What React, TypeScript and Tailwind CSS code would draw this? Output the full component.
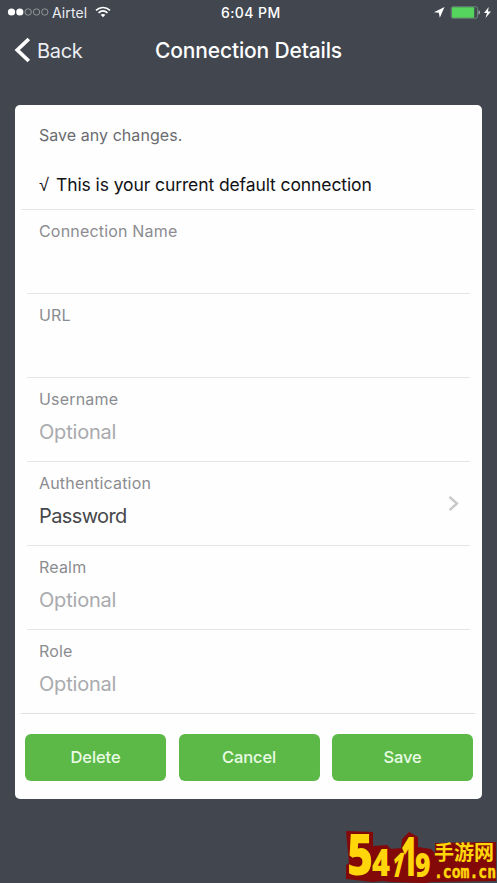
import React from "react";

type FieldProps = {
  label: string;
  value?: string;
  placeholder?: string;
  chevron?: boolean;
  last?: boolean;
};

const Field = ({ label, value, placeholder, chevron, last }: FieldProps) => {
  return (
    <div className="relative h-[84px]">
      <div className="px-[24px] pt-[9px]">
        <p className="text-[16px] leading-[24px] tracking-[0.18px] text-[#8b8c90]">
          {label}
        </p>
        {placeholder && (
          <p className="mt-[9px] text-[20px] leading-[24px] tracking-[-0.2px] text-[#a9aaad]">
            {placeholder}
          </p>
        )}
        {value && (
          <p className="mt-[9px] text-[20px] leading-[24px] tracking-[-0.6px] text-[#47484c]">
            {value}
          </p>
        )}
      </div>
      {chevron && (
        <svg
          className="absolute left-[433px] top-[33px]"
          width="12"
          height="18"
          viewBox="0 0 12 18"
          fill="none"
          stroke="#c8c8cb"
          strokeWidth="2.4"
        >
          <path d="M1.5 1.8 9 8.5 1.5 15.2" />
        </svg>
      )}
      <div
        className={
          last
            ? "absolute bottom-0 left-[6px] right-[7px] h-px bg-[#dfe1e4]"
            : "absolute bottom-0 left-[12px] right-[12px] h-px bg-[#e5e6ea]"
        }
      />
    </div>
  );
};

const StatusBar = () => {
  return (
    <div className="relative flex h-[26px] items-center text-[14px] text-white">
      <svg className="ml-[7px] -mt-[2px]" width="43" height="10" viewBox="0 0 43 10">
        <circle cx="4.5" cy="5" r="3.6" fill="#fff" />
        <circle cx="12.8" cy="5" r="3.6" fill="#fff" />
        <g fill="none" stroke="#a4a7ac" strokeWidth="0.8">
          <circle cx="21.2" cy="5" r="3.2" />
          <circle cx="29.5" cy="5" r="3.2" />
          <circle cx="37.8" cy="5" r="3.2" />
        </g>
      </svg>
      <span className="-mt-[2px] ml-[2px] w-[43px] tracking-[0.1px] text-[#eceef2]">Airtel</span>
      <svg className="-mt-[2px]" width="16" height="12" viewBox="0 0 16 12" fill="none" stroke="#fff" strokeWidth="1.6">
        <path d="M1 4.4C5 .6 11 .6 15 4.4" />
        <path d="M3.5 6.9c2.7-2.4 6.3-2.4 9 0" />
        <path d="M5.6 8.8c1.5-1.2 3.3-1.2 4.8 0L8 11.2Z" fill="#fff" stroke="none" />
      </svg>
      <span className="absolute left-[221px] top-[2px] font-medium tracking-[0.4px]">6:04 PM</span>
      <svg className="absolute left-[433px] top-[6px]" width="62" height="14" viewBox="0 0 62 14">
        <path d="M11.5 1 1 6.2 5.8 6.8 6.8 11.8Z" fill="#fff" />
        <rect x="18.2" y=".8" width="26.4" height="11.4" rx="1.8" fill="none" stroke="#779986" strokeWidth=".8" />
        <rect x="19" y="1.3" width="22.2" height="10.4" rx="1" fill="#55d55e" />
        <path d="M45.6 4.3c1.5.4 1.5 4 0 4.4Z" fill="#d3d6da" />
        <path d="M55.7 1 51 7.1h3l-1.5 4.8L58 5.6h-3Z" fill="#fff" />
      </svg>
    </div>
  );
};

const Watermark = () => {
  return (
    <svg
      className="absolute bottom-0 right-0"
      width="157"
      height="58"
      viewBox="340 825 157 58"
      fill="#ffd60a"
      strokeLinejoin="round"
      fontFamily="'Open Sans', 'Noto Sans', sans-serif"
      fontWeight="800"
    >
      {/* dark plate behind the lettering */}
      <path
        d="M346 831l27 1v14l14-1 4 4 10-1 1-9 7-7 9 5v10l13 2 4 4v-10l61-1v39l-64 1-7 1-34-1-9-1-9 1-27-3v-14l3-2Z"
        fill="#830909"
      />
      <text transform="translate(347 875) scale(.8 1)" fontSize="56">5</text>
      <text transform="translate(372 876) scale(.83 1)" fontSize="37">4</text>
      <text transform="translate(389 877) skewX(-14) scale(.6 1)" fontSize="34">1</text>
      <text transform="translate(401 876) scale(.5 1)" fontSize="55">1</text>
      <text transform="translate(415 877) scale(.78 1)" fontSize="34">9</text>
      <text x="434" y="860" fontSize="20" fontWeight="700" fontFamily="'Noto Sans CJK SC', sans-serif">手游网</text>
      <text
        x="434"
        y="878"
        fontSize="17"
        fontFamily="'DejaVu Sans Mono', monospace"
        stroke="#ffd60a"
        strokeWidth=".5"
        textLength="62"
        lengthAdjust="spacingAndGlyphs"
      >
        .com.cn
      </text>
    </svg>
  );
};

export default function App() {
  return (
    <div className="relative h-[883px] w-[497px] overflow-hidden bg-[#41464f] font-['Inter',sans-serif]">
      <StatusBar />
      <header className="relative flex h-[48px] items-center text-white">
        <svg className="ml-[14px]" width="17" height="26" viewBox="0 0 17 26" fill="none" stroke="#fff" strokeWidth="3.8">
          <path d="M14.8 2 3.3 13l11.5 11" />
        </svg>
        <span className="ml-[6px] mt-[1px] text-[20px] tracking-[-0.3px] text-[#eceef2]">Back</span>
        <h1 className="absolute left-[155px] top-[9px] whitespace-nowrap text-[21px] leading-[32px] font-medium tracking-[-0.15px]">
          Connection Details
        </h1>
      </header>
      <main className="ml-[15px] mt-[31px] h-[694px] w-[467px] rounded-[5px] bg-[#fefefe]">
        <div className="relative h-[105px] pt-[18px]">
          <p className="ml-[24px] text-[16px] leading-[24px] tracking-[0.05px] text-[#6a6b6f]">
            Save any changes.
          </p>
          <p className="ml-[24px] mt-[26px] flex whitespace-nowrap text-[17.5px] leading-[24px] tracking-[-0.1px] text-[#111215]">
            <span className="w-[17px] font-['Liberation_Sans',sans-serif] text-[18px]">√</span>
            This is your current default connection
          </p>
          <div className="absolute bottom-0 left-[6px] right-[7px] h-px bg-[#e4e6ea]" />
        </div>
        <Field label="Connection Name" />
        <Field label="URL" />
        <Field label="Username" placeholder="Optional" />
        <Field label="Authentication" value="Password" chevron />
        <Field label="Realm" placeholder="Optional" />
        <Field label="Role" placeholder="Optional" last />
        <div className="ml-[10px] mr-[9px] mt-[20px] flex justify-between">
          {["Delete", "Cancel", "Save"].map((name) => (
            <button
              key={name}
              className="h-[47px] w-[141px] rounded-[6px] bg-[#5cb947] pb-[1px] text-[16.5px] font-medium tracking-[-0.1px] text-[#e9fbe4]"
            >
              {name}
            </button>
          ))}
        </div>
      </main>
      <Watermark />
    </div>
  );
}
